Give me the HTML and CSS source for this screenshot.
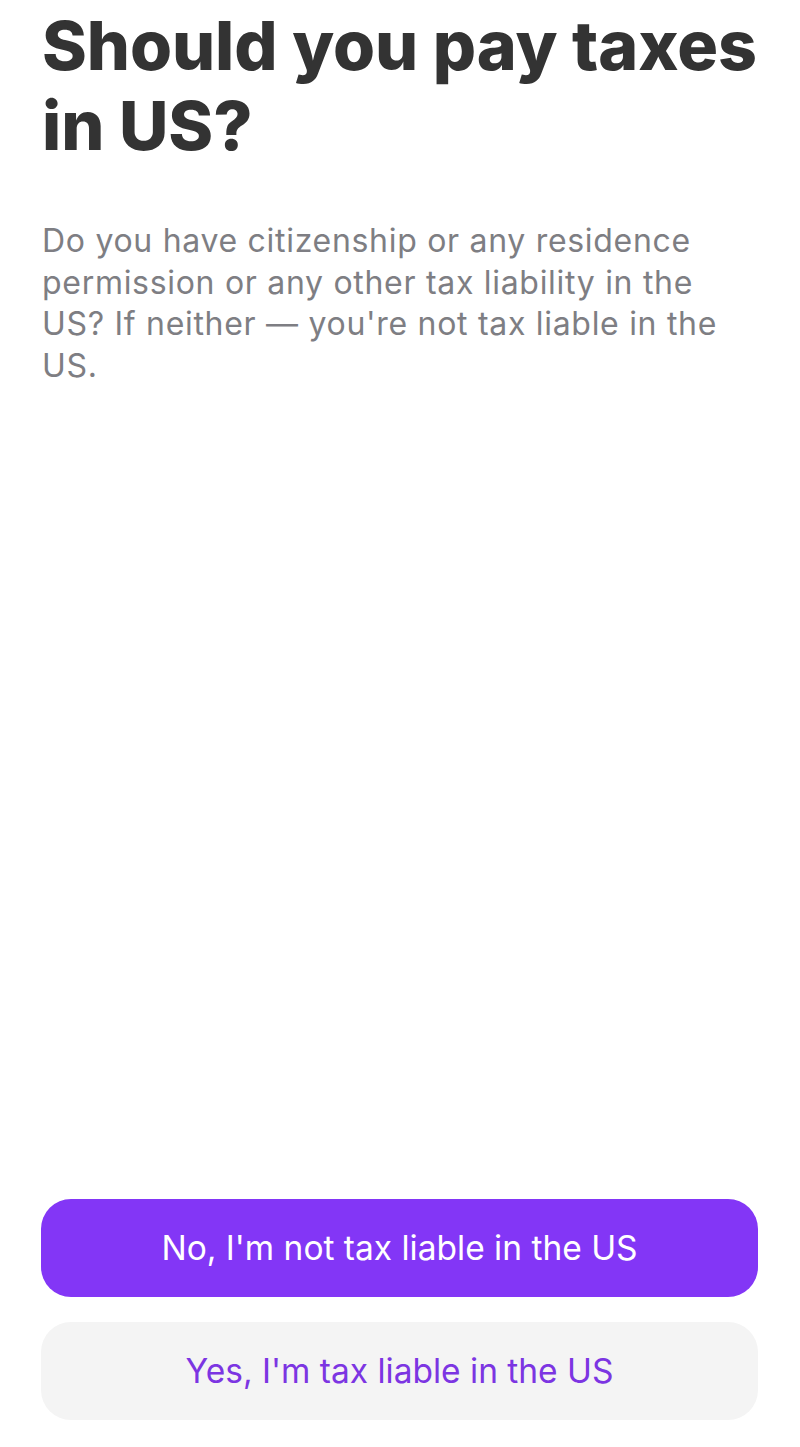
FILE: index.html
```html
<!DOCTYPE html>
<html>
<head>
    <title>Tax residence</title>
    <link rel="stylesheet" href="styles.css">
</head>
<body>
    <div class="screen">
        <div class="content">
            <h1 class="title">Should you pay taxes in US?</h1>
            <p class="lead">Do you have citizenship or any residence<br>permission or any other tax liability in the<br>US? If neither — you're not tax liable in the<br>US.</p>
        </div>
        <div class="actions">
            <button class="btn btn-primary" type="button">No, I'm not tax liable in the US</button>
            <button class="btn btn-secondary" type="button">Yes, I'm tax liable in the US</button>
        </div>
    </div>
</body>
</html>
```

FILE: styles.css
```css
html, body {
    margin: 0;
    padding: 0;
    background-color: #fff;
}

body {
    font-family: Inter, "Noto Sans", sans-serif;
}

.screen {
    height: 1447px;
    box-sizing: border-box;
    padding: 0 42px 27px 41px;
    display: flex;
    flex-direction: column;
    justify-content: space-between;
}

.content {
    padding-left: 1px;
}

.title {
    margin: 0;
    padding-top: 5px;
    font-size: 68px;
    line-height: 80px;
    font-weight: 800;
    letter-spacing: -0.1px;
    color: #333333;
}

.lead {
    margin: 55px 0 0;
    font-size: 32px;
    line-height: 41.5px;
    letter-spacing: 0.7px;
    color: #7e7e83;
}

.actions {
    display: flex;
    flex-direction: column;
    gap: 25px;
}

.btn {
    height: 98px;
    width: 100%;
    border: none;
    border-radius: 30px;
    font-family: inherit;
    font-size: 33.5px;
    cursor: pointer;
}

.btn-primary {
    background-color: #8336f6;
    color: #fff;
}

.btn-secondary {
    background-color: #f4f4f4;
    color: #7c35e2;
}
```
